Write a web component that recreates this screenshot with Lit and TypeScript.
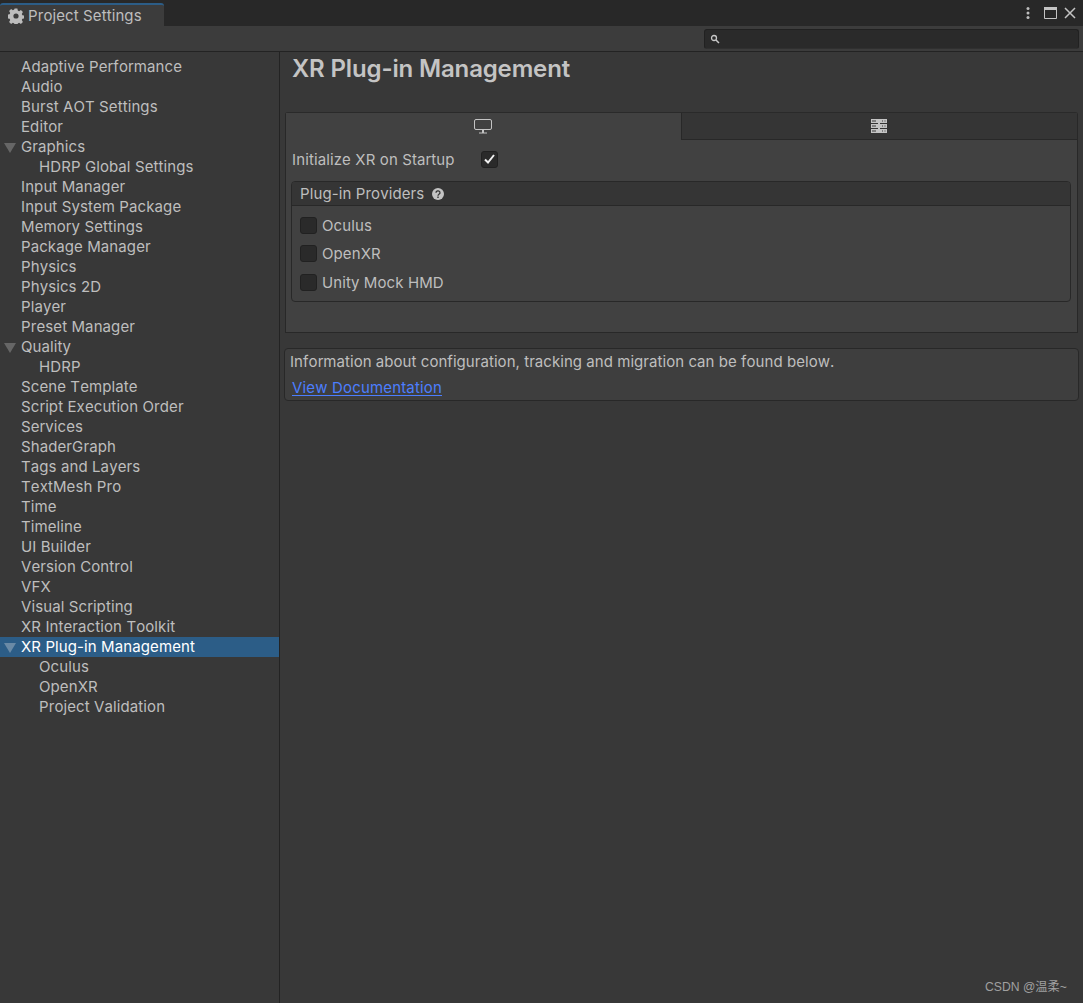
import { LitElement, html, css, svg } from "lit";
import { customElement } from "lit/decorators.js";

const items: [string, number, boolean?, boolean?][] = [
  ["Adaptive Performance", 0], ["Audio", 0], ["Burst AOT Settings", 0], ["Editor", 0],
  ["Graphics", 0, true], ["HDRP Global Settings", 1], ["Input Manager", 0], ["Input System Package", 0],
  ["Memory Settings", 0], ["Package Manager", 0], ["Physics", 0], ["Physics 2D", 0], ["Player", 0],
  ["Preset Manager", 0], ["Quality", 0, true], ["HDRP", 1], ["Scene Template", 0], ["Script Execution Order", 0],
  ["Services", 0], ["ShaderGraph", 0], ["Tags and Layers", 0], ["TextMesh Pro", 0], ["Time", 0], ["Timeline", 0],
  ["UI Builder", 0], ["Version Control", 0], ["VFX", 0], ["Visual Scripting", 0], ["XR Interaction Toolkit", 0],
  ["XR Plug-in Management", 0, true, true], ["Oculus", 1], ["OpenXR", 1], ["Project Validation", 1],
];

const gear = svg`<svg class="gear" width="16" height="16" viewBox="0 0 16 16"><path fill="#bdbdbd" fill-rule="evenodd" d="M6.600 0.600h2.800l.4 2 1.300.6 1.800-1.100 2 2-1.100 1.800.6 1.300 2 .4v2.800l-2 .4-.6 1.300 1.100 1.800-2 2-1.800-1.100-1.300.6-.4 2H6.600l-.4-2-1.300-.6-1.800 1.100-2-2 1.100-1.800-.6-1.300-2-.4V6.600l2-.4.6-1.300L1.100 3.100l2-2 1.800 1.100 1.300-.6zM8 5.400a2.600 2.600 0 1 0 0 5.200 2.600 2.600 0 0 0 0-5.200z"/></svg>`;

@customElement("app-root")
export class AppRoot extends LitElement {
  static styles = css`
    :host { display: block; width: 1083px; height: 1003px; overflow: hidden; background: #383838; color: #bebebe; font-family: Inter, "Liberation Sans", sans-serif; font-size: 15px; font-kerning: none; letter-spacing: 0.1px; position: relative; }
    .tabbar { height: 26px; background: #282828; display: flex; justify-content: space-between; box-sizing: border-box; }
    .tab { width: 164px; height: 26px; box-sizing: border-box; padding: 3px 0 0 0; background: #282828; }
    .tabin { height: 23px; background: #3c3c3c; border-top: 2px solid #2c5d87; border-top-right-radius: 3px; border-top-left-radius: 3px; box-sizing: border-box; display: flex; align-items: center; gap: 4px; padding: 0 0 0 8px; font-size: 15px; line-height: 21px; }
    .gear { flex: none; }
    .winbtns { display: flex; align-items: center; padding-right: 7px; }
    .winbtns svg { display: block; }
    .toolbar { height: 26px; box-sizing: border-box; background: #3c3c3c; border-bottom: 1px solid #232323; display: flex; justify-content: flex-end; padding: 3px 4px 0 0; }
    .search { width: 375px; height: 20px; box-sizing: border-box; background: #2a2a2a; border: 1px solid #212121; border-bottom-color: #303030; border-radius: 3px; display: flex; align-items: center; padding-left: 5px; }
    .main { display: flex; height: 951px; }
    .side { width: 280px; box-sizing: border-box; border-right: 1px solid #232323; padding-top: 5px; flex: none; }
    .row { height: 20px; line-height: 20px; padding-left: 21px; white-space: nowrap; position: relative; }
    .row.l1 { padding-left: 39px; }
    .row.sel { background: #2c5d87; color: #fff; }
    .tri { position: absolute; left: 4px; top: 6px; width: 0; height: 0; border-left: 6px solid transparent; border-right: 6px solid transparent; border-top: 10px solid #666; }
    .row.sel .tri { border-top-color: #6a8aa6; }
    .content { flex: 1; min-width: 0; padding: 0 5px; position: relative; }
    h1 { margin: 0; font-size: 24px; font-weight: 600; line-height: 30px; padding: 2px 0 0 7px; height: 60px; box-sizing: border-box; color: #c4c4c4; letter-spacing: -0.15px; }
    .box { width: 793px; height: 221px; box-sizing: border-box; border: 1px solid #282828; border-top-color: #2a2a2a; border-radius: 3px 3px 0 0; background: #414141; }
    .tabs { display: flex; height: 27px; }
    .t { height: 27px; display: flex; align-items: center; justify-content: center; box-sizing: border-box; }
    .t1 { width: 396px; background: #414141; border-right: 1px solid #282828; padding-right: 2px; }
    .t2 { flex: 1; background: #353535; border-bottom: 1px solid #282828; padding-right: 2px; }
    .init { display: flex; align-items: center; height: 40px; padding: 0 0 2px 6px; box-sizing: border-box; margin-bottom: 1px; letter-spacing: 0.12px; }
    .init span { width: 189px; }
    .cb { width: 17px; height: 17px; box-sizing: border-box; background: #2a2a2a; border: 1px solid #212121; border-radius: 3px; display: flex; align-items: center; justify-content: center; flex: none; }
    .providers { margin-left: 5px; width: 780px; height: 121px; box-sizing: border-box; border: 1px solid #282828; border-radius: 4px; }
    .phead { height: 24px; box-sizing: border-box; background: #353535; border-bottom: 1px solid #282828; border-radius: 3px 3px 0 0; display: flex; align-items: center; padding-left: 8px; gap: 8px; }
    .p { display: flex; align-items: center; gap: 5px; padding-left: 8px; height: 28.5px; }
    .plist { padding-top: 5px; }
    .info { margin-top: 15px; width: 795px; height: 53px; margin-left: -1px; box-sizing: border-box; border: 1px solid #282828; border-radius: 4px; background: #3e3e3e; padding: 3px 0 0 5px; line-height: 20px; letter-spacing: 0.05px; }
    .link { display: block; margin: 6px 0 0 2px; color: #4c7eff; line-height: 19px; width: max-content; text-decoration: underline; text-underline-offset: 2px; letter-spacing: 0.17px; }
    .wm { position: absolute; left: 985px; top: 979px; font-family: "Liberation Sans", "Noto Sans CJK SC", sans-serif; font-size: 12.2px; line-height: 17px; color: #a0a0a0; white-space: nowrap; letter-spacing: 0; }
  `;

  render() {
    return html`
      <div class="tabbar">
        <div class="tab"><div class="tabin">${gear}<span>Project Settings</span></div></div>
        <div class="winbtns">
          <svg width="14" height="14" viewBox="0 0 14 14" style="margin-right:9px"><circle cx="7" cy="2.500" r="1.500" fill="#bdbdbd"/><circle cx="7" cy="7" r="1.500" fill="#bdbdbd"/><circle cx="7" cy="11.500" r="1.500" fill="#bdbdbd"/></svg>
          <svg width="13" height="12" viewBox="0 0 13 12" style="margin-right:7px"><path d="M.5 .5h12v11H.5z" fill="none" stroke="#c4c4c4"/><path d="M0 0h13v3H0z" fill="#c4c4c4"/></svg>
          <svg width="12" height="12" viewBox="0 0 12 12"><path d="M1 1l10 10M11 1L1 11" stroke="#c4c4c4" stroke-width="1.500" fill="none"/></svg>
        </div>
      </div>
      <div class="toolbar">
        <div class="search">
          <svg width="10" height="10" viewBox="0 0 10 10"><circle cx="4" cy="4" r="2.500" fill="none" stroke="#c8c8c8" stroke-width="1.300"/><path d="M6 6l3 3" stroke="#c8c8c8" stroke-width="1.500"/></svg>
        </div>
      </div>
      <div class="main">
        <div class="side">
          ${items.map(([n, l, tri, sel]) => html`<div class="row ${l ? "l1" : ""} ${sel ? "sel" : ""}">${tri ? html`<i class="tri"></i>` : ""}${n}</div>`)}
        </div>
        <div class="content">
          <h1>XR Plug-in Management</h1>
          <div class="box">
            <div class="tabs">
              <div class="t t1">
                <svg width="18" height="15" viewBox="0 0 18 15"><rect x=".5" y=".5" width="17" height="10" rx="1.500" fill="none" stroke="#c4c4c4"/><path d="M9 11v3" stroke="#c4c4c4" stroke-width="2"/><path d="M5 14h8" stroke="#c4c4c4"/></svg>
              </div>
              <div class="t t2">
                <svg width="16" height="14" viewBox="0 0 16 14">
                  <path d="M0 0h16v4H0zM0 5h16v4H0zM0 10h16v4H0z" fill="#c4c4c4"/>
                  <path d="M7 4h2v1H7zM7 9h2v1H7z" fill="#c4c4c4"/>
                  <path d="M1 1.500h4v1H1zM1 6.500h4v1H1zM1 11.500h4v1H1zM11 1.500h1v1h-1zM13.500 1.500h1v1h-1zM11 6.500h1v1h-1zM13.500 6.500h1v1h-1zM11 11.500h1v1h-1zM13.500 11.500h1v1h-1z" fill="#3a3a3a"/>
                </svg>
              </div>
            </div>
            <div class="init">
              <span>Initialize XR on Startup</span>
              <div class="cb"><svg width="11" height="10" viewBox="0 0 11 10"><path d="M1 5.500l3 3 6-7.500" fill="none" stroke="#f0f0f0" stroke-width="2"/></svg></div>
            </div>
            <div class="providers">
              <div class="phead">
                <span>Plug-in Providers</span>
                <svg width="12" height="12" viewBox="0 0 12 12"><circle cx="6" cy="6" r="6" fill="#c4c4c4"/><path d="M4 4.700a2 1.800 0 1 1 3 1.500c-.7.400-1 .7-1 1.500" fill="none" stroke="#353535" stroke-width="1.300"/><rect x="5.300" y="8.500" width="1.400" height="1.500" fill="#353535"/></svg>
              </div>
              <div class="plist">
                ${["Oculus", "OpenXR", "Unity Mock HMD"].map((n) => html`<div class="p"><div class="cb"></div><span>${n}</span></div>`)}
              </div>
            </div>
          </div>
          <div class="info">
            <div>Information about configuration, tracking and migration can be found below.</div>
            <a class="link">View Documentation</a>
          </div>
        </div>
      </div>
      <div class="wm">CSDN @温柔~</div>
    `;
  }
}
